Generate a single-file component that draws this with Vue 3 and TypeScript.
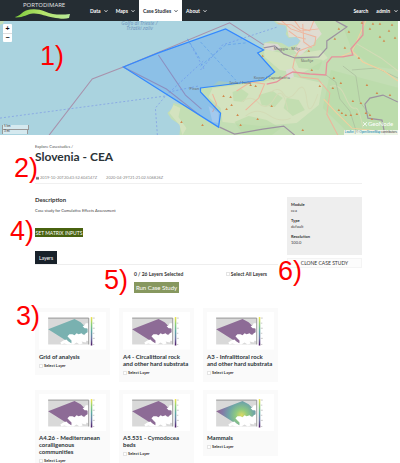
<script setup lang="ts">
import { ref, computed } from 'vue'

interface Layer {
  id: string
  title: string
  kind: 'grid' | 'habitat' | 'density'
}

const menu = ['Data', 'Maps', 'Case Studies', 'About']
const layers: Layer[] = [
  { id: 'grid', title: 'Grid of analysis', kind: 'grid' },
  { id: 'a4', title: 'A4 - Circalittoral rock and other hard substrata', kind: 'habitat' },
  { id: 'a3', title: 'A3 - Infralittoral rock and other hard substrata', kind: 'habitat' },
  { id: 'a426', title: 'A4.26 - Mediterranean coralligenous communities', kind: 'habitat' },
  { id: 'a5531', title: 'A5.531 - Cymodocea beds', kind: 'habitat' },
  { id: 'mammals', title: 'Mammals', kind: 'density' },
]
const details = [
  { term: 'Module', value: 'cea' },
  { term: 'Type', value: 'default' },
  { term: 'Resolution', value: '100.0' },
]
const fills = { grid: '#79b1b0', habitat: '#8d6b96', density: 'url(#density)' }
const total = 26
const selected = ref<string[]>([])
const allSelected = computed({
  get: () => selected.value.length === layers.length,
  set: (on: boolean) => {
    selected.value = on ? layers.map((l) => l.id) : []
  },
})

// Small summit markers scattered over the hills
const peaks = [
  [348, 32], [361, 23], [369, 29], [379, 24], [388, 31], [394, 38], [391, 25], [379, 37], [334, 39], [338, 29],
  [344, 48], [308, 51], [358, 58], [250, 85], [223, 96], [230, 97], [231, 105], [226, 109], [237, 115], [257, 119],
  [271, 106], [255, 86], [311, 70], [319, 86], [332, 88], [340, 83], [333, 78], [352, 101], [360, 103], [366, 85],
  [376, 93], [389, 95], [338, 110], [341, 113], [345, 115], [350, 115], [356, 114], [365, 113], [369, 115], [371, 119],
  [302, 130], [240, 125], [202, 125], [181, 122], [383, 41], [372, 24], [262, 56],
]
</script>

<template>
  <div class="page">
    <header class="topbar">
      <a class="brand" href="#" aria-label="Portodimare">
        <svg viewBox="0 0 56 19">
          <defs>
            <linearGradient id="wave"><stop offset="0" stop-color="#7ecb3c" /><stop offset="0.5" stop-color="#b4e36a" /><stop offset="1" stop-color="#b9ea9a" /></linearGradient>
          </defs>
          <text x="8" y="7">PORTODIMARE</text>
          <path fill="url(#wave)" d="M0 17C5 16 7 12 11 10.500C17 8.500 24 9 30 11.500C38 15 46 15 55 14L54 18C49 19.500 44 18.500 38 17.500C31 16.500 25 13 18 13.500C12 14 9 17.500 1 17.500Z" />
        </svg>
      </a>
      <nav class="menu">
        <a v-for="item in menu" :key="item" href="#" :class="{ active: item === 'Case Studies' }">
          {{ item }}
          <svg class="chev" viewBox="0 0 4 4"><path d="M.5 1.2L2 2.8L3.5 1.2" /></svg>
        </a>
      </nav>
      <nav class="menu user">
        <a href="#">Search</a>
        <a href="#">admin <svg class="chev" viewBox="0 0 4 4"><path d="M.5 1.2L2 2.8L3.5 1.2" /></svg></a>
      </nav>
    </header>

    <section class="map">
      <svg class="canvas" viewBox="0 21 397 114" preserveAspectRatio="xMinYMid slice">
        <rect y="21" width="398" height="114" fill="#aad3df" />
        <path fill="#c3deb4" d="M273 21L276 24L285 26L286 31L285 34L288 38L295 37L300 39L297 44L288 47L281 43L270 41L263 43L262 50L257 53L266 62L274 72L263 80L233 83L218 81L212 86L200 88V92L213 106L220 113L219 127L208 122L200 116L185 106L173 103L172 108L167 113L171 119L180 125L179 135H398V21Z" />
        <path fill="#c9dfe9" d="M208 106L218 113L218 123L212 122Z" />
        <path fill="#aad3df" d="M0 21H5L4 24L0 26Z" />
        <path fill="#c3deb4" d="M0 21H4L3 24L0 25Z" />
        <g fill="#d9e5c2" opacity="0.8">
          <path d="M212 88L262 82L290 76L322 83L318 105L296 123L260 126L222 122L220 108L208 97Z" />
          <path d="M173 105L180 108L178 117L186 128L182 135L179 125L169 113Z" />
          <path d="M263 49L290 55L320 50L327 58L300 74L279 70L264 57Z" />
        </g>
        <g fill="#b9dba8" opacity="0.6">
          <path d="M340 21H398V70L370 66L351 50Z" /><path d="M330 70L398 88V135H350L322 108Z" /><path d="M292 55L322 60L318 70L298 68Z" />
          <path d="M232 92l9-3 7 5-5 8-10-1zM258 95l14-4 10 7-8 9-13-2zM234 122l14-6 18 4 14 8-9 7h-28zM286 98l12 2 6 10-12 6-9-8z" />
        </g>
        <path fill="#e0dcd2" d="M274 21H313L321 34L308 48L299 56L293 50L300 41L296 37L288 37L286 26Z" />
        <path fill="#dbdad4" d="M264 43L277 44L281 49L272 51L263 49ZM285 70L292 68L293 77L287 79ZM304 30L316 37L311 48L302 44Z" />
        <g fill="none" stroke="#d3dbb6" stroke-width="1">
          <path d="M270 92Q278 86 283 94T296 91T306 100T317 94M241 102Q250 94 258 103T274 98T287 110M245 116Q256 107 268 115T290 118M329 87Q338 82 344 96T354 108T362 128M356 44L380 58L397 71" />
        </g>
        <path fill="none" stroke="#a9bb9c" stroke-width="0.7" d="M325 75L335 82L339 99L349 111L355 130M342 66L355 76L359 102L370 116M397 78L376 68L351 70" />
        <g fill="none" stroke="#efb49c" stroke-width="1">
          <path d="M281 21L290 29L302 33L315 37L314 45L298 51L294 58L292 68L300 77L317 79L329 93L326 114L337 135" />
          <path d="M294 21L299 28L309 31L313 21M302 24L303 42L311 48M288 31L296 37L305 39M236 91L250 82L264 84L258 98L245 110M212 94L216 104L212 112M277 24L291 25L300 31L318 29" />
        </g>
        <path fill="none" stroke="#f4cf9e" stroke-width="1" d="M350 50L362 62L383 71L397 81M365 21L351 52L339 57M323 99L335 112L351 128L397 133" />
        <path fill="none" stroke="#e6919b" stroke-width="1.3" d="M362 21L362 35L350 49L352 55L342 57L331 57L326 63L325 75L309 74L292 72L286 75L276 82L266 84" />
        <path fill="none" stroke="#a892ac" stroke-width="1" d="M49 135L92 79L123 67L229 23L263 45M123 67L166 89L199 115M158 55L185 95L201 109" />
        <path fill="none" stroke="#9c92a0" stroke-width="1.2" d="M263 48L274 46L283 54L294 58L318 57L326 48V41L346 27L335 21M219 127L234 134L262 129L283 126L294 135M397 102L382 95L369 98L364 104L367 118L381 120L384 135" />
        <g fill="none" stroke="#7c9ae5" stroke-width="0.7" stroke-dasharray="2 2">
          <path d="M0 118L165 96M157 135L155 108L165 96L204 60M168 92L198 86M200 70L222 45L277 27M187 39L204 70" />
        </g>
        <path fill="#3388ff" fill-opacity="0.25" stroke="#3388ff" stroke-width="1.2" d="M123 67L158 53L225 29L263 50L257 53L274 72L263 80L200 88V92L220 113L218 127Z" />
        <g fill="none" stroke="#559bea" stroke-width="0.6" stroke-dasharray="3 2"><path d="M187 39L200 60M200 42L235 80M200 66L225 45L245 43" /></g>
        <path v-for="([x, y], i) in peaks" :key="i" fill="#d08a4d" :d="`M${x} ${y - 1.3}l1.3 2.2h-2.6z`" />
        <g class="sea"><text x="121" y="25">Golfo di Trieste /</text><text x="126" y="30">Tržaški zaliv</text></g>
        <g class="town"><text x="273" y="50">Muggia - Milje</text><text x="300" y="62">Škofije</text><text x="253" y="79">Koper / Capodistria</text><text x="229" y="84">Izola / Isola</text><text x="189" y="90">Piran</text></g>
        <g fill="none" stroke="#fff" stroke-width="0.8"><path d="M362 122l4 4M362 126l4-4" /></g>
        <text class="mark" x="367" y="126">GeoNode</text>
      </svg>
      <div class="zoom"><button type="button" aria-label="Zoom in">+</button><button type="button" aria-label="Zoom out">−</button></div>
      <div class="scale"><span>5 km</span><span>3 mi</span></div>
      <div class="credit"><a href="#">Leaflet</a> | © <a href="#">OpenStreetMap</a> contributors</div>
    </section>

    <main class="content">
      <div class="crumb"><a href="#">Explore Casestudies</a> /</div>
      <h1>Slovenia - CEA</h1>
      <div class="dates">
        <svg viewBox="0 0 4 4"><path fill="#777" d="M0 1h4v3H0zM1 0h.5v1H1zM2.5 0H3v1h-.5z" /></svg>
        <time>2019-10-20T20:43:52.604147Z</time><time>2020-04-29T21:21:02.506826Z</time>
      </div>

      <div class="columns">
        <div class="primary">
          <h2>Description</h2>
          <p class="about">Case study for Cumulative Effects Assessment</p>
          <button class="matrix" type="button">SET MATRIX INPUTS</button>
          <div class="tabs"><button type="button">Layers</button></div>
          <div class="run">
            <span class="count">{{ selected.length }} / {{ total }} Layers Selected</span>
            <label class="all"><input v-model="allSelected" type="checkbox" />Select All Layers</label>
            <button class="go" type="button">Run Case Study</button>
          </div>
          <div class="cards">
            <article v-for="layer in layers" :key="layer.id" class="card">
              <svg class="thumb" viewBox="0 0 66 37">
                <defs>
                  <linearGradient id="scale" x2="0" y2="1"><stop offset="0" stop-color="#f3e34a" /><stop offset="0.25" stop-color="#8bcf74" /><stop offset="0.5" stop-color="#5ba6a4" /><stop offset="0.75" stop-color="#6d75a5" /><stop offset="1" stop-color="#4a1462" /></linearGradient>
                  <radialGradient id="density" gradientUnits="userSpaceOnUse" cx="34" cy="21" r="23"><stop offset="0" stop-color="#ddda62" /><stop offset="0.25" stop-color="#8fca80" /><stop offset="0.55" stop-color="#6fa6a6" /><stop offset="0.8" stop-color="#807ea8" /><stop offset="1" stop-color="#8d6b96" /></radialGradient>
                </defs>
                <rect width="66" height="37" fill="#fff" />
                <rect x="9" y="6" width="40" height="26" fill="#d9d9d9" />
                <path :fill="fills[layer.kind]" d="M9 17L35 7L41 10L45 14L48 17V22H45L40 25L34 26L32 31L25 27Z" />
                <path fill="#fff" d="M49 11L46 11L45 13L43 14L45 16L48 16V20L46 21L45 23L43 22L42 21L39 22L37 21L35 23L33 22L30 22L28 24L30 26L32 28V31L29 29L27 27L24 28L21 30L22 32L25 31L28 32H34L37 30L40 32L43 31L42 29L46 30L47 28L49 29Z" />
                <path fill="none" stroke="#8f8f8f" stroke-width="0.9" d="M9 6H49V32" />
                <rect x="51" y="5" width="1.500" height="28" fill="url(#scale)" />
                <path stroke="#999" stroke-width="0.5" d="M53 6h2M53 11h1.500M53 16h2M53 21h1.500M53 26h2M53 32h1.500" />
              </svg>
              <h3>{{ layer.title }}</h3>
              <label><input v-model="selected" type="checkbox" :value="layer.id" />Select Layer</label>
            </article>
          </div>
        </div>

        <aside class="side">
          <dl>
            <div v-for="d in details" :key="d.term"><dt>{{ d.term }}</dt><dd>{{ d.value }}</dd></div>
          </dl>
          <button type="button">CLONE CASE STUDY</button>
        </aside>
      </div>
    </main>

    <span class="note n1">1)</span>
    <span class="note n2">2)</span>
    <span class="note n3">3)</span>
    <span class="note n4">4)</span>
    <span class="note n5">5)</span>
    <span class="note n6">6)</span>
  </div>
</template>

<style>
body { background: #fff; }
html { scrollbar-width: none; }
</style>

<style scoped>
.page { position: relative; font: 4px/6px Lato, "Open Sans", sans-serif; color: #333; }
.page * { box-sizing: border-box; }
a { color: inherit; text-decoration: none; }
button { font: inherit; border: 0; margin: 0; padding: 0; cursor: pointer; }
h1, h2, h3, p, dl, dd { margin: 0; }
input { appearance: none; width: 4px; height: 4px; margin: 0 1px 0 0; border: 1px solid #e4e4e4; background: #fff; flex: none; }
input:checked { background: #4a5f16; }
label { display: flex; align-items: center; font-weight: 700; }

.topbar { display: flex; height: 21px; background: #252d33; color: #fff; padding-left: 15px; }
.brand svg { display: block; width: 56px; height: 19px; }
.brand text { font: 6px "Open Sans", sans-serif; fill: #e4e6e7; }
.menu { display: flex; margin-left: 15px; font-size: 5px; font-weight: 700; }
.menu a { display: flex; align-items: center; gap: 3px; padding: 0 4px; }
.menu .active { background: #fff; color: #252d33; }
.menu.user { margin-left: auto; }
.menu.user a { gap: 4px; padding: 0 2px 0 6px; }
.chev { width: 4px; height: 4px; fill: none; stroke: currentColor; stroke-width: 0.8; }

.map { position: relative; height: 114px; margin-right: 2px; overflow: hidden; background: #aad3df; }
.canvas { display: block; width: 100%; height: 100%; }
.sea { font: italic 5px "Noto Sans", sans-serif; fill: #6f93bd; }
.town { font: 4px "Noto Sans", sans-serif; fill: #666; }
.mark { font: 6px Lato, sans-serif; fill: #fff; }
.zoom { position: absolute; left: 3px; top: 3px; display: grid; width: 9px; border-radius: 1px; background: #fff; }
.zoom button { height: 9px; background: none; color: #111; font: 700 7px/8px "Liberation Sans", sans-serif; }
.zoom button + button { border-top: 1px solid #ddd; }
.scale { position: absolute; left: 2px; bottom: 1px; display: grid; font-size: 3px; line-height: 3px; }
.scale span { width: 27px; height: 5px; border: 1px solid #999; border-top: 0; padding-left: 1px; background: #ffffff80; }
.scale span + span { width: 26px; height: 4px; border-bottom: 0; }
.credit { position: absolute; right: 0; bottom: 0; padding: 0 1px; background: #ffffffb3; font: 3px/5px "Liberation Sans", sans-serif; }
.credit a { color: #0078a8; }

.content { padding: 9px 38px 8px 35px; }
.crumb { color: #555; }
h1 { font-size: 12px; line-height: 14px; font-weight: 700; color: #2b3338; }
.dates { display: flex; align-items: center; height: 20px; padding: 9px 0 1px; border-bottom: 1px solid #f0f0f0; color: #888; }
.dates svg { width: 3px; height: 4px; margin: 0 1px; }
.dates time { margin-right: 9px; }
.columns { display: grid; grid-template-columns: 243fr 75fr; gap: 9px; align-items: start; padding-top: 12px; }
h2 { font-size: 6px; line-height: 8px; font-weight: 700; }
.about { margin-top: 4px; color: #444; font-size: 4px; }
.matrix { display: block; width: 48px; height: 9px; margin-top: 14px; background: #48620f; color: #fff; font-size: 5px; }
.tabs { margin-top: 14px; border-bottom: 1px solid #eee; }
.tabs button { display: block; width: 22px; height: 13px; background: #18212a; color: #fff; font-size: 5px; }
.run { display: grid; grid-template-columns: 45px auto; justify-content: space-between; row-gap: 5px; padding: 6px 11px 0 99px; font-size: 5px; }
.count { font-weight: 700; white-space: nowrap; }
.go { height: 11px; background: #87985f; color: #fff; font-size: 6px; white-space: nowrap; }
.cards { display: grid; grid-template-columns: repeat(3, 1fr); gap: 8px 9px; align-items: start; margin-top: 15px; }
.card { padding: 4px 4px 6px; background: #fafafa; }
.thumb { display: block; width: 100%; }
h3 { margin: 3px 0; font-size: 6px; line-height: 7px; font-weight: 700; color: #2b3338; }
.side dl { display: grid; align-content: start; gap: 4px; min-height: 58px; margin-top: 1px; padding: 5px 4px; background: #eee; }
.side dt { font-weight: 700; }
.side dt, .side dd { line-height: 6px; }
.side button { display: block; width: 100%; height: 10px; margin-top: 3px; border: 1px solid #f4f4f4; background: #fcfcfc; color: #333; font-size: 5px; }

.note { position: absolute; font: 27px/30px "Liberation Sans", sans-serif; color: #f00; }
.n1 { left: 40px; top: 41px; }
.n2 { left: 14px; top: 153px; }
.n3 { left: 16px; top: 301px; }
.n4 { left: 10px; top: 216px; }
.n5 { left: 104px; top: 265px; }
.n6 { left: 278px; top: 256px; }
</style>
